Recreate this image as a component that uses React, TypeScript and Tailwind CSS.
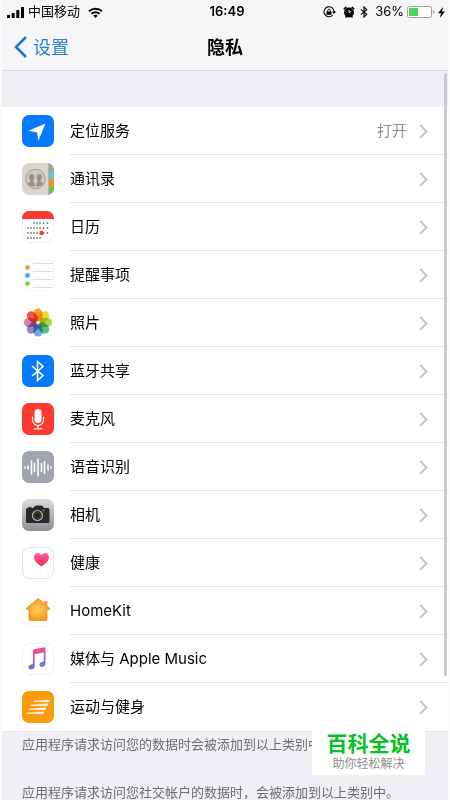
import React from "react";

const TileBorder = () => (
  <rect x="0.5" y="0.5" width="31" height="31" rx="7" fill="#fff" stroke="#f0f0f2" />
);

const LocationIcon = () => (
  <>
    <rect width="32" height="32" rx="7" fill="#057aff" />
    <path d="M23.500 8.500 6.500 15.800l8.600 1.600L16.300 26z" fill="#fff" />
  </>
);

const ContactsIcon = () => (
  <>
    <clipPath id="contacts-clip">
      <rect width="32" height="32" rx="7" />
    </clipPath>
    <g clipPath="url(#contacts-clip)">
      <rect width="32" height="32" fill="#d9d5cd" />
      <rect x="27" width="5" height="7" fill="#a4a09a" />
      <rect x="27" y="7" width="5" height="9" fill="#63c3e6" />
      <rect x="27" y="16" width="5" height="8" fill="#f7941d" />
      <rect x="27" y="24" width="5" height="8" fill="#5fc552" />
      <path d="M27 0v32" stroke="#9a958c" strokeWidth="1" />
    </g>
    <circle cx="13.500" cy="16" r="9.700" fill="#cfcac1" stroke="#a29c92" strokeWidth="1" />
    <path
      d="M5.500 20.500c1-1.500 3-1.200 3-2.600C6.800 16 6.200 11 9.600 11c3.600 0 3 5 1.400 6.900 0 1.500 1.900 1.300 1.900 5.300-3 .8-5.900-.3-7.400-2.700zM21.500 20.500c-1-1.500-3-1.200-3-2.600 1.700-1.900 2.300-6.900-1.100-6.900-3.600 0-3 5-1.400 6.900 0 1.500-1.900 1.300-1.900 5.300 3 .8 5.900-.3 7.400-2.700z"
      fill="#979188"
    />
  </>
);

const calendarDots = [
  [12, 15, 18, 21.5, 25.5],
  [6, 9, 12, 15, 18, 21.5, 25.5],
  [6, 9, 12, 15, 21.5, 25.5],
  [6, 9, 12, 15, 18],
];

const CalendarIcon = () => (
  <>
    <TileBorder />
    <path d="M0 8V7a7 7 0 0 1 7-7h18a7 7 0 0 1 7 7v1z" fill="#f9392f" />
    {calendarDots.map((row, r) =>
      row.map((x) => <circle key={`${r}-${x}`} cx={x} cy={12 + r * 5} r="0.8" fill="#333" />),
    )}
    <circle cx="19.500" cy="22" r="2.200" fill="#f9392f" />
  </>
);

const RemindersIcon = () => (
  <>
    <rect x="0.5" y="0.5" width="31" height="31" rx="7" fill="#fff" stroke="#f6f6f7" />
    <path d="M11 4.500h20M11 12.500h20M11 20.500h20M11 28.500h20" stroke="#dedee0" strokeWidth="1" />
    {[
      ["#d8a234", "#f0dcae"],
      ["#2ea6dd", "#abdcf1"],
      ["#7fcb3e", "#cdecb4"],
    ].map(([dot, ring], i) => (
      <g key={dot}>
        <circle cx="5.500" cy={8.5 + i * 8} r="3" fill={ring} />
        <circle cx="5.500" cy={8.5 + i * 8} r="1.900" fill={dot} />
      </g>
    ))}
  </>
);

const petals = ["#fb9f2c", "#eedd28", "#abd34c", "#5cbc90", "#74aadf", "#9882c6", "#d384ae", "#f2564e"];

const PhotosIcon = () => (
  <>
    <rect x="0.5" y="0.5" width="31" height="31" rx="7" fill="#fff" stroke="#f8f8f9" />
    <g style={{ isolation: "isolate" }}>
      {petals.map((color, i) => (
        <rect
          key={color}
          x="11.500"
          y="1.500"
          width="9"
          height="12.500"
          rx="4.500"
          fill={color}
          className="mix-blend-multiply"
          transform={`rotate(${i * 45} 16 15.500)`}
        />
      ))}
    </g>
    <circle cx="16" cy="15.500" r="1.200" fill="#fff" />
  </>
);

const BluetoothIcon = () => (
  <>
    <rect width="32" height="32" rx="7" fill="#057aff" />
    <path d="m10 11 11 9.500-5.500 5V6.500l5.500 5L10 21" fill="none" stroke="#fff" strokeWidth="1.600" />
  </>
);

const MicrophoneIcon = () => (
  <>
    <rect width="32" height="32" rx="7" fill="#fc3a30" />
    <rect x="12.500" y="6" width="7" height="14" rx="3.500" fill="#fff" />
    <path d="M10.500 14v3a5.500 5.500 0 0 0 11 0v-3M16 22.500v3M12 25.800h8" fill="none" stroke="#fff" strokeWidth="1.200" strokeLinecap="round" />
  </>
);

const SpeechIcon = () => (
  <>
    <rect width="32" height="32" rx="7" fill="#a0a4b0" />
    <path
      d="M3 16v1M6 15v3M9.500 10v13M12.500 12.500v8M16 8v17M19.500 12.500v8M22.500 10.500v12M26 14v5M29 16v1"
      stroke="#fff"
      strokeWidth="1.500"
      strokeLinecap="round"
    />
  </>
);

const CameraIcon = () => (
  <>
    <linearGradient id="camera-bg" x1="0" y1="0" x2="0" y2="1">
      <stop offset="0" stopColor="#dcdcdf" />
      <stop offset="1" stopColor="#8e8e94" />
    </linearGradient>
    <rect width="32" height="32" rx="7" fill="url(#camera-bg)" />
    <path
      d="M4 10.500q0-1.500 1.500-1.500h1V8h3v1H11l2-2q.6-.5 1.800-.5h4q1.200 0 1.800.5l1.500 2H26q1.500 0 1.500 1.500v12q0 1.500-1.500 1.500H5.500Q4 24 4 22.500z"
      fill="#29292b"
    />
    <circle cx="15.500" cy="16.500" r="5" fill="#202022" stroke="#b9b3a8" strokeWidth="1.200" />
    <circle cx="15.500" cy="16.500" r="3" fill="none" stroke="#55534f" strokeWidth="0.800" />
    <circle cx="21.500" cy="11.500" r="0.800" fill="#d6a437" />
  </>
);

const HealthIcon = () => (
  <>
    <linearGradient id="health-heart" x1="0" y1="0" x2="0" y2="1">
      <stop offset="0" stopColor="#fc5da0" />
      <stop offset="1" stopColor="#f32e48" />
    </linearGradient>
    <rect x="0.5" y="0.5" width="31" height="31" rx="7" fill="#fff" stroke="#e2e2e4" />
    <path
      d="M19.500 19.500C15 16.500 12 14 12 10.300 12 8 13.700 6 15.700 6c1.700 0 3 1 3.800 2.300C20.300 7 21.600 6 23.300 6 25.300 6 27 8 27 10.300c0 3.700-3 6.200-7.500 9.200z"
      fill="url(#health-heart)"
    />
  </>
);

const HomeIcon = () => (
  <>
    <radialGradient id="home-fill">
      <stop offset="0" stopColor="#ffd158" />
      <stop offset="1" stopColor="#f39a1c" />
    </radialGradient>
    <rect x="0.5" y="0.5" width="31" height="31" rx="7" fill="#fff" stroke="#f5f5f6" />
    <path
      d="M15.600 4 4.500 13q-.8 1 .2 1.500H7V24q0 1.500 1.500 1.500h15Q25 25.500 25 24v-9.500h2.300q1-.5.200-1.500L25 11V6.500h-2.500V9l-5.700-5q-.6-.5-1.200 0z"
      fill="url(#home-fill)"
      stroke="#e98f1d"
      strokeWidth="0.800"
    />
  </>
);

const MusicIcon = () => (
  <>
    <linearGradient id="music-note" x1="0.300" y1="0" x2="0.600" y2="1">
      <stop offset="0" stopColor="#fb4f72" />
      <stop offset="0.450" stopColor="#c858b8" />
      <stop offset="0.750" stopColor="#7a63dc" />
      <stop offset="1" stopColor="#35b3ee" />
    </linearGradient>
    <TileBorder />
    <path
      d="M11 7.500q0-1 1-1.200l10.500-2q1-.2 1 .8V20.500c0 2-1.300 3.200-3.100 3.500-2 .3-3-.9-3-2.200 0-1.600 1.200-2.500 2.800-2.800 1.200-.2 1.600-.5 1.600-1.500V9.500l-9.100 1.800V23c0 2-1.300 3.200-3.100 3.500-2 .3-3.100-.9-3.100-2.200 0-1.600 1.300-2.500 2.900-2.800 1.200-.2 1.600-.5 1.600-1.500z"
      fill="url(#music-note)"
    />
  </>
);

const FitnessIcon = () => (
  <>
    <rect width="32" height="32" rx="7" fill="#fb9a0a" />
    <path d="m12 10 16-1-.8 2L12 10.500zM8.500 14l17.700-1.200-.8 2L8.500 14.500zM7 18l17-1.200-.8 2L7 18.500zM5 22l17-1.200-.8 2L5 22.500z" fill="#fff" stroke="#fff" strokeWidth="0.400" />
  </>
);

type Item = { label: string; Icon: () => React.ReactElement; value?: string };

const items: Item[] = [
  { label: "定位服务", Icon: LocationIcon, value: "打开" },
  { label: "通讯录", Icon: ContactsIcon },
  { label: "日历", Icon: CalendarIcon },
  { label: "提醒事项", Icon: RemindersIcon },
  { label: "照片", Icon: PhotosIcon },
  { label: "蓝牙共享", Icon: BluetoothIcon },
  { label: "麦克风", Icon: MicrophoneIcon },
  { label: "语音识别", Icon: SpeechIcon },
  { label: "相机", Icon: CameraIcon },
  { label: "健康", Icon: HealthIcon },
  { label: "HomeKit", Icon: HomeIcon },
  { label: "媒体与 Apple Music", Icon: MusicIcon },
  { label: "运动与健身", Icon: FitnessIcon },
];

function Row({ label, Icon, value }: Item) {
  return (
    <li className="group">
      <button type="button" className="flex h-12 w-full items-stretch gap-4 bg-white pl-5 text-left">
        <svg viewBox="0 0 32 32" className="size-8 shrink-0 self-center" aria-hidden="true">
          <Icon />
        </svg>
        <span className="flex flex-1 items-center gap-3 border-b border-[#e3e3e6] pr-5 pt-0.5 group-last:border-transparent">
          <span className="flex-1 text-[15px] text-black">{label}</span>
          {value && <span className="text-[15px] text-[#8e8e93]">{value}</span>}
          <svg viewBox="0 0 9 15" className="h-[15px] w-[9px]" fill="none" aria-hidden="true">
            <path d="m1.200 1 6.300 6.500L1.200 14" stroke="#c3c3c8" strokeWidth="1.800" />
          </svg>
        </span>
      </button>
    </li>
  );
}

function StatusBar() {
  return (
    <div className="grid h-6 grid-cols-[1fr_auto_1fr] items-center text-[13px] text-black">
      <div className="flex items-center gap-1 pl-[5px]">
        <svg viewBox="0 0 17 11" className="h-[11px] w-[17px]" aria-hidden="true">
          <path
            d="M0 8.500q0-.5.500-.5h2q.5 0 .5.500v2q0 .5-.5.500h-2q-.5 0-.5-.5zM4.700 6.500q0-.5.500-.5h2q.5 0 .5.500v4q0 .5-.5.500h-2q-.5 0-.5-.5zM9.300 3.500q0-.5.500-.5h2q.5 0 .5.500v7q0 .5-.5.500h-2q-.5 0-.5-.5zM14 .5q0-.5.500-.5h2q.5 0 .5.500v10q0 .5-.5.500h-2q-.5 0-.5-.5z"
          />
        </svg>
        <span>中国移动</span>
        <svg viewBox="0 0 15 11" className="ml-1 h-[11px] w-[15px]" fill="none" stroke="#000" strokeWidth="2" aria-hidden="true">
          <path d="M1 4.300a9.300 9.300 0 0 1 13 0M3.500 6.800a5.700 5.700 0 0 1 8 0" />
          <path d="M7.500 11 5.300 8.700a3.200 3.200 0 0 1 4.400 0z" fill="#000" stroke="none" />
        </svg>
      </div>
      <span className="pl-1 font-semibold">16:49</span>
      <div className="flex items-center justify-end gap-[3px] pr-[3px]">
        <svg viewBox="0 0 13 12" className="mr-1 h-3 w-[13px]" fill="none" stroke="#000" aria-hidden="true">
          <path d="M9.800 9A5 5 0 1 1 11 6" strokeWidth="1.100" />
          <path d="M9 5.500h4L11 8z" fill="#000" stroke="none" />
          <path d="M3.500 5.500h5v3.300h-5z" fill="#000" stroke="none" />
          <path d="M4.700 6V4.500a1.300 1.300 0 0 1 2.600 0V6" strokeWidth="0.900" />
        </svg>
        <svg viewBox="0 0 12 12" className="mr-0.5 size-3" aria-hidden="true">
          <circle cx="6" cy="6.500" r="4.900" />
          <path d="M.8 3.300 3.300.9M11.200 3.300 8.700.9M2.500 11.500l1.300-1.500M9.500 11.500 8.200 10" stroke="#000" strokeWidth="1.500" />
          <path d="M6 4v2.700l2.200-1.300" fill="none" stroke="#f6f6f8" strokeWidth="1" />
        </svg>
        <svg viewBox="0 0 8 12" className="mr-1 h-3 w-2" fill="none" stroke="#000" strokeWidth="1.100" aria-hidden="true">
          <path d="m.8 3.300 6 5-2.800 2.700V1l2.800 2.700-6 5" />
        </svg>
        <span>36%</span>
        <svg viewBox="0 0 28 12" className="h-3 w-7" aria-hidden="true">
          <rect x="0.500" y="0.500" width="24" height="11" rx="2" fill="#fff" stroke="#9c9ca1" />
          <rect x="2" y="2" width="9" height="8" fill="#4cd562" />
          <path d="M26 4v4q1.500-.5 1.500-2T26 4z" fill="#9c9ca1" />
        </svg>
        <svg viewBox="0 0 7 11" className="h-[11px] w-[7px]" aria-hidden="true">
          <path d="M5 0 0 6.200h3L1.800 11 7 4.500H4z" />
        </svg>
      </div>
    </div>
  );
}

export default function App() {
  return (
    <div className="relative min-h-screen border-x-2 border-[#fbfbfc] bg-[#efeff4] font-[Inter,'Noto_Sans_CJK_SC',sans-serif]">
      <header className="border-b border-[#d9d9de] bg-[#f6f6f8]">
        <StatusBar />
        <nav className="grid h-[46px] grid-cols-[1fr_auto_1fr] items-center px-3">
          <a href="#settings" className="flex items-center gap-[6px] text-[18px] text-[#2a7fd6]">
            <svg viewBox="0 0 13 22" className="h-[22px] w-[13px]" fill="none" aria-hidden="true">
              <path d="M12 1 2 11l10 10" stroke="#1a76d8" strokeWidth="2.600" />
            </svg>
            设置
          </a>
          <h1 className="text-[18px] font-semibold text-black">隐私</h1>
        </nav>
      </header>

      <main>
        <ul className="mt-9 border-b border-[#e6e6ea]">
          {items.map((item) => (
            <Row key={item.label} {...item} />
          ))}
        </ul>
        <div className="flex flex-col gap-8 pl-5 pt-1 text-[13px] leading-4 text-[#6d6d72]">
          <p>应用程序请求访问您的数据时会被添加到以上类别中。</p>
          <p>应用程序请求访问您社交帐户的数据时，会被添加到以上类别中。</p>
        </div>
      </main>

      <div className="absolute right-px top-[73px] h-[603px] w-[3px] rounded-full bg-[#c9c9ce]" />

      <aside className="absolute right-[23px] top-[729px] flex h-[46px] w-[113px] flex-col items-center justify-center bg-white">
        <strong className="text-[21px] leading-6 text-[#05c125]">百科全说</strong>
        <span className="text-[12px] leading-4 text-[#8c8c8c]">助你轻松解决</span>
      </aside>
    </div>
  );
}
